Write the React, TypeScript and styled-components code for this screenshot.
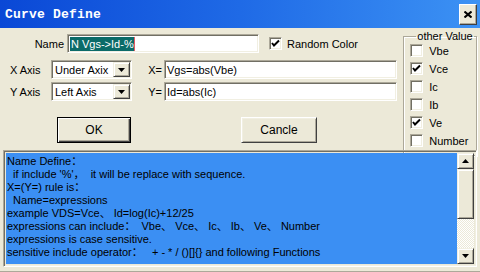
import React from 'react';
import styled, { createGlobalStyle } from 'styled-components';

const GlobalStyle = createGlobalStyle`
  html, body {
    margin: 0;
    padding: 0;
    background: #ece9d8;
  }
  body {
    font-family: "Liberation Sans", Arial, "Noto Sans CJK SC", sans-serif;
    font-size: 11px;
    color: #000;
  }
`;

const Window = styled.div`
  width: 480px;
  height: 272px;
  box-sizing: border-box;
  background: #ece9d8;
  display: flex;
  flex-direction: column;
  overflow: hidden;
  border-bottom: 1px solid #aca899;
`;

const TitleBar = styled.div`
  height: 28px;
  flex: none;
  display: flex;
  align-items: center;
  justify-content: space-between;
  padding: 0 3px 0 5px;
  box-sizing: border-box;
  background: linear-gradient(90deg, #0a48d6 0%, #1f6ae6 50%, #3c92f4 100%);
`;

const Title = styled.span`
  font-family: "Liberation Mono", "DejaVu Sans Mono", monospace;
  font-weight: 700;
  font-size: 13px;
  color: #fff;
  letter-spacing: 0.2px;
`;

const CloseButton = styled.div`
  width: 18px;
  height: 21px;
  box-sizing: border-box;
  background: #ece9d8;
  border: 1px solid;
  border-color: #fff #404040 #404040 #fff;
  box-shadow: inset -1px -1px #aca899;
  display: flex;
  align-items: center;
  justify-content: center;
`;

const Body = styled.div`
  flex: 1;
  display: flex;
  flex-direction: column;
  padding: 0 3px 4px 3px;
`;

const TopSection = styled.div`
  height: 122px;
  display: flex;
`;

const Form = styled.div`
  width: 402px;
  display: flex;
  flex-direction: column;
  padding-top: 6px;
`;

const Row = styled.div<{ $mt?: number; $h?: number }>`
  display: flex;
  align-items: center;
  height: ${(p) => p.$h ?? 19}px;
  margin-top: ${(p) => p.$mt ?? 0}px;
`;

const NameLabel = styled.span`
  width: 61px;
  text-align: right;
  margin-right: 3px;
`;

const AxisLabel = styled.span`
  width: 48px;
  padding-left: 7px;
  box-sizing: border-box;
`;

const EqLabel = styled.span`
  width: 32px;
  padding-right: 2px;
  box-sizing: border-box;
  text-align: right;
`;

const Sunken = styled.div<{ $w: number }>`
  width: ${(p) => p.$w}px;
  height: 19px;
  box-sizing: border-box;
  background: #fff;
  border: 1px solid;
  border-color: #aca899 #fff #fff #aca899;
  box-shadow: inset 1px 1px #716f64, inset -1px -1px #f1efe2;
  display: flex;
  align-items: center;
  padding: 0 2px;
  white-space: nowrap;
  overflow: hidden;
`;

const Selection = styled.span`
  background: #0b6b68;
  color: #fff;
  line-height: 14px;
  padding: 0 0 0 1px;
`;

const Caret = styled.span`
  width: 1px;
  height: 14px;
  background: #e25a66;
`;

const SelectBox = styled(Sunken)`
  justify-content: space-between;
  padding: 0 1px 0 3px;
`;

const DropButton = styled.div`
  width: 17px;
  height: 15px;
  box-sizing: border-box;
  background: #ece9d8;
  border: 1px solid;
  border-color: #f1efe2 #404040 #404040 #f1efe2;
  box-shadow: inset 1px 1px #fff, inset -1px -1px #aca899;
  display: flex;
  align-items: center;
  justify-content: center;
`;

const CheckRow = styled.label<{ $gap?: number }>`
  display: flex;
  align-items: center;
  gap: ${(p) => p.$gap ?? 6}px;
  height: 13px;
`;

const CheckBox = styled.span`
  width: 13px;
  height: 13px;
  box-sizing: border-box;
  background: #fff;
  border: 1px solid;
  border-color: #aca899 #fff #fff #aca899;
  box-shadow: inset 1px 1px #716f64, inset -1px -1px #f1efe2;
  display: flex;
  align-items: center;
  justify-content: center;
  flex: none;
`;

const Button = styled.div<{ $w: number; $default?: boolean }>`
  width: ${(p) => p.$w}px;
  height: 26px;
  box-sizing: border-box;
  background: #ece9d8;
  border: 1px solid;
  border-color: ${(p) => (p.$default ? '#000' : '#fff #404040 #404040 #fff')};
  box-shadow: ${(p) =>
    p.$default
      ? 'inset 1px 1px #fff, inset -1px -1px #404040, inset -2px -2px #aca899'
      : 'inset 1px 1px #f1efe2, inset -1px -1px #aca899'};
  display: flex;
  align-items: center;
  justify-content: center;
  font-size: 12px;
`;

const Group = styled.fieldset`
  width: 74px;
  box-sizing: border-box;
  margin: 3px 0 -6px 0;
  padding: 2px 0 0 6px;
  border: 1px solid #aca899;
  box-shadow: inset 1px 1px #fff, 1px 1px #fff;
  display: flex;
  flex-direction: column;
  gap: 5px;
`;

const Legend = styled.legend`
  padding: 0 1px;
  margin-left: 6px;
  font-size: 11px;
  line-height: 11px;
`;

const TextArea = styled.div`
  flex: 1;
  display: flex;
  box-sizing: border-box;
  border: 1px solid;
  border-color: #aca899 #fff #fff #aca899;
  box-shadow: inset 1px 1px #716f64, inset -1px -1px #f1efe2;
  padding: 2px 2px 2px 2px;
  overflow: hidden;
`;

const TextContent = styled.div`
  flex: 1;
  background: #3b8ff3;
  padding: 2px 1px;
  white-space: pre;
  line-height: 13px;
  font-size: 11px;
  overflow: hidden;
`;

const ScrollBar = styled.div`
  width: 17px;
  display: flex;
  flex-direction: column;
  background: repeating-conic-gradient(#fff 0 25%, #ece9d8 0 50%) 0 0 / 2px 2px;
`;

const ScrollPart = styled.div<{ $h: number }>`
  height: ${(p) => p.$h}px;
  box-sizing: border-box;
  background: #ece9d8;
  border: 1px solid;
  border-color: #f1efe2 #404040 #404040 #f1efe2;
  box-shadow: inset 1px 1px #fff, inset -1px -1px #aca899;
  display: flex;
  align-items: center;
  justify-content: center;
`;

const ScrollTrack = styled.div`
  flex: 1;
`;

const Arrow = ({ up }: { up?: boolean }) => (
  <svg width="7" height="4" viewBox="0 0 7 4">
    <polygon points={up ? '3.5,0 7,4 0,4' : '0,0 7,0 3.5,4'} fill="#000" />
  </svg>
);

const Check = ({ on }: { on?: boolean }) => (
  <CheckBox>
    {on && (
      <svg width="9" height="9" viewBox="0 0 9 9">
        <polyline points="1,4 3,6.5 8,1.5" fill="none" stroke="#000" strokeWidth="2" />
      </svg>
    )}
  </CheckBox>
);

const options = [
  { name: 'Vbe', on: false },
  { name: 'Vce', on: true },
  { name: 'Ic', on: false },
  { name: 'Ib', on: false },
  { name: 'Ve', on: true },
  { name: 'Number', on: false },
];

const helpText = [
  'Name Define：',
  "  if include '%'，  it will be replace with sequence.",
  'X=(Y=) rule is：',
  '  Name=expressions',
  'example VDS=Vce、 Id=log(Ic)+12/25',
  'expressions can include：  Vbe、 Vce、 Ic、 Ib、 Ve、 Number',
  'expressions is case sensitive.',
  'sensitive include operator：   + - * / ()[]{} and following Functions',
].join('\n');

export default function App() {
  return (
    <>
      <GlobalStyle />
      <Window>
        <TitleBar>
          <Title>Curve Define</Title>
          <CloseButton>
            <svg width="8" height="7" viewBox="0 0 8 7">
              <path d="M0.5 0.5 L7.5 6.5 M7.5 0.5 L0.5 6.5" stroke="#000" strokeWidth="2" />
            </svg>
          </CloseButton>
        </TitleBar>
        <Body>
          <TopSection>
            <Form>
              <Row>
                <NameLabel>Name</NameLabel>
                <Sunken $w={192}>
                  <Selection>N Vgs-&gt;Id-%</Selection>
                  <Caret />
                </Sunken>
                <CheckRow $gap={5} style={{ marginLeft: 10 }}>
                  <Check on />
                  <span>Random Color</span>
                </CheckRow>
              </Row>
              <Row $mt={7}>
                <AxisLabel>X Axis</AxisLabel>
                <SelectBox $w={81}>
                  <span>Under Axix</span>
                  <DropButton>
                    <Arrow />
                  </DropButton>
                </SelectBox>
                <EqLabel>X=</EqLabel>
                <Sunken $w={233}>Vgs=abs(Vbe)</Sunken>
              </Row>
              <Row $mt={3}>
                <AxisLabel>Y Axis</AxisLabel>
                <SelectBox $w={81}>
                  <span>Left Axis</span>
                  <DropButton>
                    <Arrow />
                  </DropButton>
                </SelectBox>
                <EqLabel>Y=</EqLabel>
                <Sunken $w={233}>Id=abs(Ic)</Sunken>
              </Row>
              <Row $mt={16} $h={26}>
                <Button $w={74} $default style={{ marginLeft: 54 }}>
                  OK
                </Button>
                <Button $w={76} style={{ marginLeft: 110 }}>
                  Cancle
                </Button>
              </Row>
            </Form>
            <Group>
              <Legend>other Value</Legend>
              {options.map((o) => (
                <CheckRow key={o.name}>
                  <Check on={o.on} />
                  <span>{o.name}</span>
                </CheckRow>
              ))}
            </Group>
          </TopSection>
          <TextArea>
            <TextContent>{helpText}</TextContent>
            <ScrollBar>
              <ScrollPart $h={16}>
                <Arrow up />
              </ScrollPart>
              <ScrollPart $h={50} />
              <ScrollTrack />
              <ScrollPart $h={16}>
                <Arrow />
              </ScrollPart>
            </ScrollBar>
          </TextArea>
        </Body>
      </Window>
    </>
  );
}
